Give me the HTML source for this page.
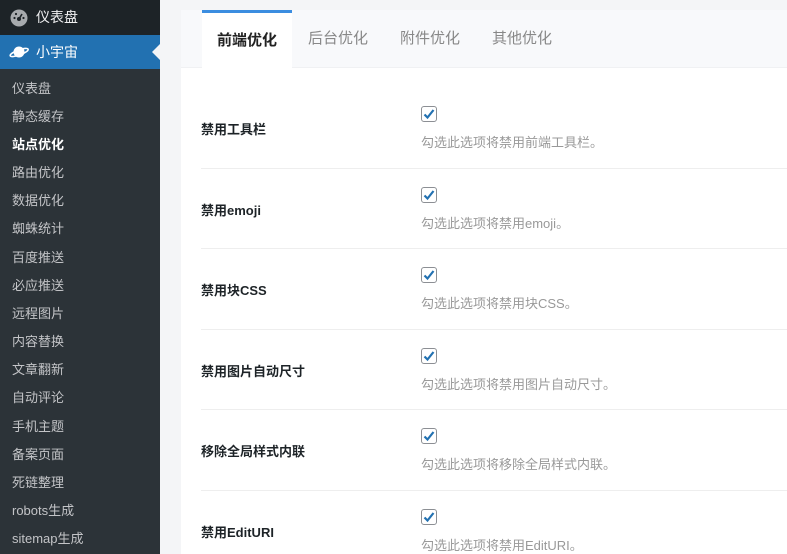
<!DOCTYPE html>
<html><head><meta charset="utf-8">
<style>
*{margin:0;padding:0;box-sizing:border-box}
html{width:787px;height:554px;overflow:hidden;background:#f4f5f7}
body{width:787px;height:554px;overflow:hidden;background:#f4f5f7;font-family:"Liberation Sans","Noto Sans CJK SC",sans-serif;position:relative}
#side{position:absolute;left:0;top:0;width:160px;height:554px;background:#2c3338}
.top1{position:absolute;left:0;top:0;width:160px;height:35px;background:#1d2327;color:#f0f0f1;font-size:14px;line-height:35px;padding-left:36px}
.top2{position:absolute;left:0;top:35px;width:160px;height:34px;background:#2271b1;color:#fff;font-size:14px;line-height:34px;padding-left:36px}
.arrow{position:absolute;right:0;top:9px;width:0;height:0;border:8px solid transparent;border-right-color:#f4f5f7}
.sub{position:absolute;left:12px;color:#c3c4c7;font-size:13px;line-height:16px}
.sub.cur{color:#fff;font-weight:bold}
#panel{position:absolute;left:181px;top:10px;width:606px;height:544px;background:#fff}
#tabs{position:absolute;left:0;top:0;width:606px;height:58px;background:#f8f9fb;border-bottom:1px solid #f0f1f3}
.tab{position:absolute;top:0;height:58px;line-height:58px;font-size:15px;color:#888}
.tab.act{background:#fff;color:#222;font-weight:bold;border-top:3px solid #3b8de0;line-height:55px;text-align:center;height:59px}
.row{position:absolute;left:20px;width:586px;height:80.5px;border-bottom:1px solid #eeeeee}
.lab{position:absolute;left:0;top:31px;font-size:13px;font-weight:bold;color:#1d2327}
.cb{position:absolute;left:220px;top:18px;width:16px;height:16px;border:1px solid #8c8f94;border-radius:3px;background:#fff}
.desc{position:absolute;left:220px;top:44px;font-size:13px;color:#999}
</style></head><body>
<div id="side">
 <div class="top1">
  <svg style="position:absolute;left:10px;top:9px" width="18" height="18" viewBox="0 0 18 18"><circle cx="9" cy="9" r="8.5" fill="#a7aaad"/><circle cx="9" cy="10" r="2" fill="#1d2327"/><path d="M9 10 L12 5" stroke="#1d2327" stroke-width="1.6"/><circle cx="4.5" cy="9" r="1.1" fill="#1d2327"/><circle cx="13.5" cy="9" r="1.1" fill="#1d2327"/><circle cx="6" cy="5" r="1.1" fill="#1d2327"/></svg>
  仪表盘</div>
 <div class="top2">
  <svg style="position:absolute;left:9px;top:9px" width="20" height="16" viewBox="0 0 20 16"><circle cx="10" cy="8" r="5.5" fill="#fff"/><ellipse cx="10" cy="8.5" rx="9.5" ry="2.6" fill="none" stroke="#fff" stroke-width="1.6" transform="rotate(-20 10 8)"/></svg>
  小宇宙<div class="arrow"></div></div>
 <div class="sub" style="top:81px">仪表盘</div>
 <div class="sub" style="top:109px">静态缓存</div>
 <div class="sub cur" style="top:137px">站点优化</div>
 <div class="sub" style="top:165px">路由优化</div>
 <div class="sub" style="top:193px">数据优化</div>
 <div class="sub" style="top:221px">蜘蛛统计</div>
 <div class="sub" style="top:250px">百度推送</div>
 <div class="sub" style="top:278px">必应推送</div>
 <div class="sub" style="top:306px">远程图片</div>
 <div class="sub" style="top:334px">内容替换</div>
 <div class="sub" style="top:362px">文章翻新</div>
 <div class="sub" style="top:390px">自动评论</div>
 <div class="sub" style="top:419px">手机主题</div>
 <div class="sub" style="top:447px">备案页面</div>
 <div class="sub" style="top:475px">死链整理</div>
 <div class="sub" style="top:503px">robots生成</div>
 <div class="sub" style="top:531px">sitemap生成</div>
</div>
<div id="panel">
 <div id="tabs">
  <div class="tab act" style="left:21px;width:90px">前端优化</div>
  <div class="tab" style="left:127px">后台优化</div>
  <div class="tab" style="left:219px">附件优化</div>
  <div class="tab" style="left:311px">其他优化</div>
 </div>
 <div class="row" style="top:78px"><div class="lab">禁用工具栏</div><div class="cb"><svg width="14" height="14" viewBox="0 0 14 14"><path d="M2.5 7.5 L5.5 10.5 L11.5 3" fill="none" stroke="#2271b1" stroke-width="2.2"/></svg></div><div class="desc">勾选此选项将禁用前端工具栏。</div></div>
 <div class="row" style="top:158.5px"><div class="lab">禁用emoji</div><div class="cb"><svg width="14" height="14" viewBox="0 0 14 14"><path d="M2.5 7.5 L5.5 10.5 L11.5 3" fill="none" stroke="#2271b1" stroke-width="2.2"/></svg></div><div class="desc">勾选此选项将禁用emoji。</div></div>
 <div class="row" style="top:239px"><div class="lab">禁用块CSS</div><div class="cb"><svg width="14" height="14" viewBox="0 0 14 14"><path d="M2.5 7.5 L5.5 10.5 L11.5 3" fill="none" stroke="#2271b1" stroke-width="2.2"/></svg></div><div class="desc">勾选此选项将禁用块CSS。</div></div>
 <div class="row" style="top:319.5px"><div class="lab">禁用图片自动尺寸</div><div class="cb"><svg width="14" height="14" viewBox="0 0 14 14"><path d="M2.5 7.5 L5.5 10.5 L11.5 3" fill="none" stroke="#2271b1" stroke-width="2.2"/></svg></div><div class="desc">勾选此选项将禁用图片自动尺寸。</div></div>
 <div class="row" style="top:400px"><div class="lab">移除全局样式内联</div><div class="cb"><svg width="14" height="14" viewBox="0 0 14 14"><path d="M2.5 7.5 L5.5 10.5 L11.5 3" fill="none" stroke="#2271b1" stroke-width="2.2"/></svg></div><div class="desc">勾选此选项将移除全局样式内联。</div></div>
 <div class="row" style="top:480.5px;border:none"><div class="lab">禁用EditURI</div><div class="cb"><svg width="14" height="14" viewBox="0 0 14 14"><path d="M2.5 7.5 L5.5 10.5 L11.5 3" fill="none" stroke="#2271b1" stroke-width="2.2"/></svg></div><div class="desc">勾选此选项将禁用EditURI。</div></div>
</div>
</body></html>
